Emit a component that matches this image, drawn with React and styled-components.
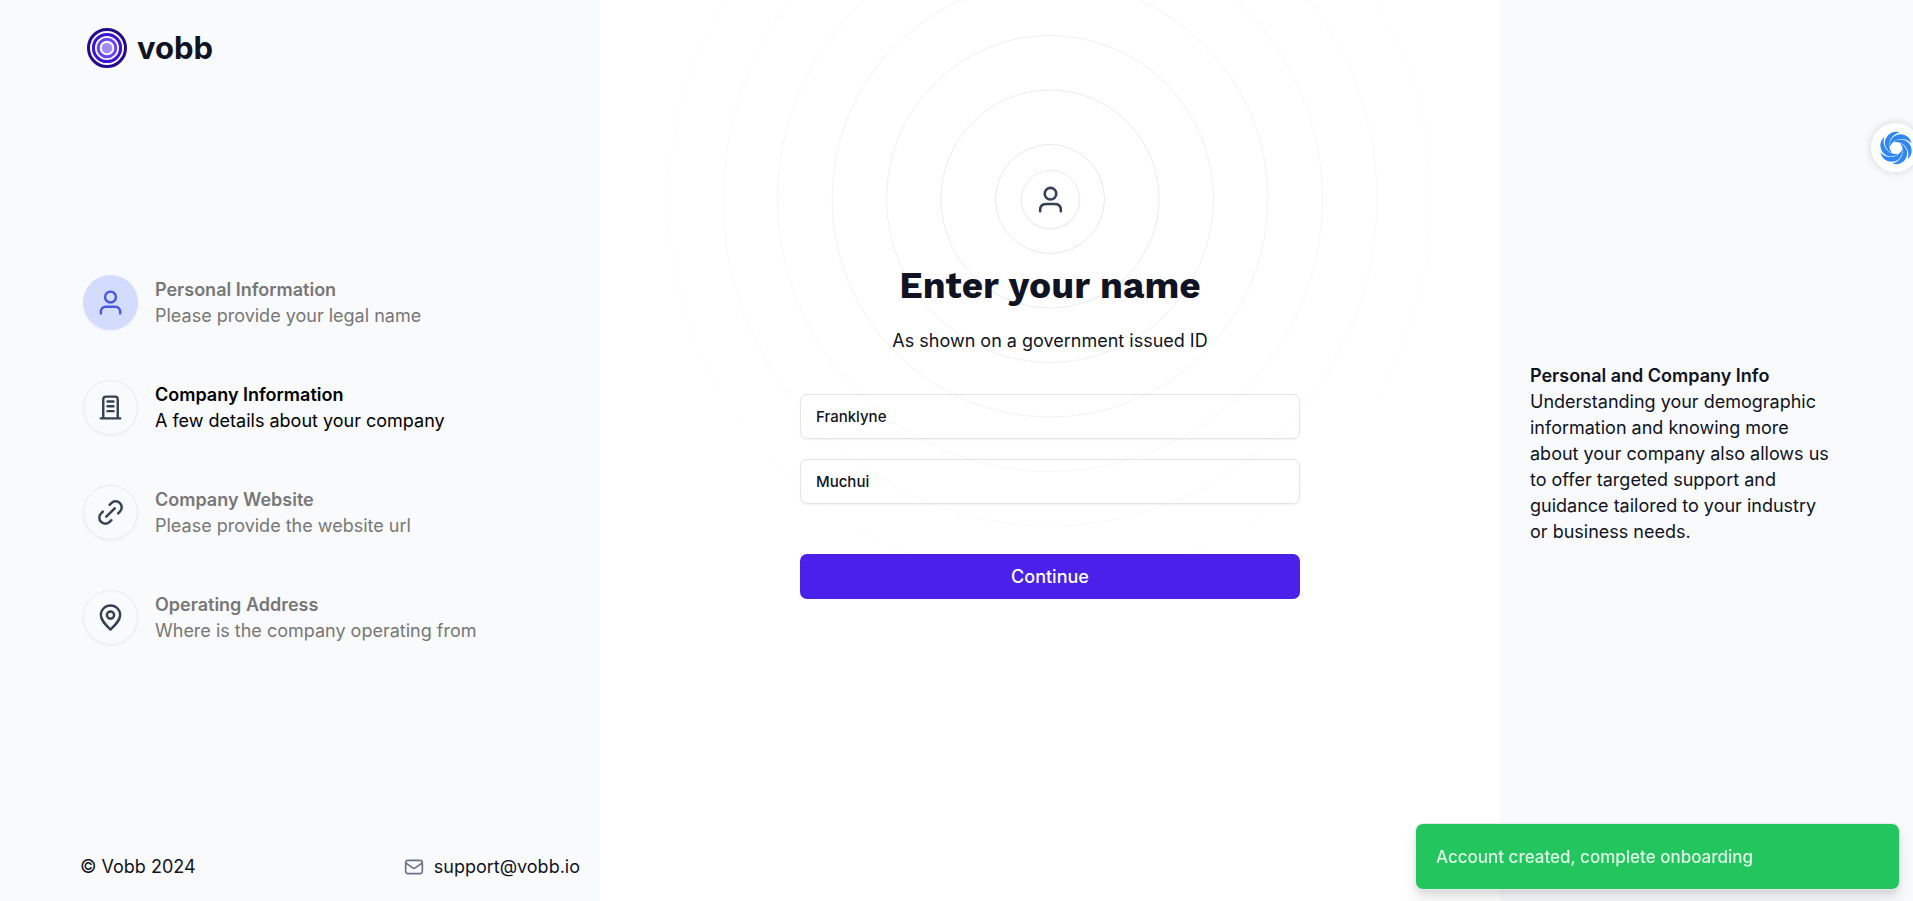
import React from "react";
import styled, { createGlobalStyle } from "styled-components";

const GlobalStyle = createGlobalStyle`
  *, *::before, *::after { box-sizing: border-box; }
  html, body { margin: 0; }
  body {
    font-family: Inter, "Liberation Sans", sans-serif;
    font-size: 18px;
    line-height: 26px;
    color: #101323;
    background: #ffffff;
    overflow-x: hidden;
  }
  h1, h2, p, ol { margin: 0; padding: 0; }
`;

const Page = styled.div`
  display: grid;
  grid-template-columns: 600px minmax(0, 1fr) 413px;
  min-height: 100vh;
`;

const Sidebar = styled.aside`
  display: flex;
  flex-direction: column;
  padding: 28px 20px 20px 80px;
  background: #f9fafc;
`;

const Brand = styled.a`
  display: flex;
  align-items: center;
  gap: 10px;
  padding-left: 7px;
  color: #101323;
  font-size: 31px;
  font-weight: 700;
  line-height: 40px;
  text-decoration: none;
`;

const Steps = styled.ol`
  flex: 1;
  display: flex;
  flex-direction: column;
  justify-content: center;
  gap: 50px;
  padding-left: 3px;
  list-style: none;
`;

const Step = styled.li`
  display: flex;
  align-items: center;
  gap: 17px;
  color: ${(p) => (p.$current ? "#000000" : "#777777")};
`;

const IconCircle = styled.span`
  display: grid;
  place-items: center;
  flex: none;
  width: ${(p) => p.$size}px;
  height: ${(p) => p.$size}px;
  border: ${(p) => (p.$filled ? "0" : "1px solid #e9eaec")};
  border-radius: 50%;
  background: ${(p) => (p.$filled ? "#d3dbff" : "transparent")};
  color: ${(p) => (p.$filled ? "#4259e0" : "#344054")};
  box-shadow: 0 1px 3px rgba(16, 24, 40, 0.05);
`;

const StepTitle = styled.h2`
  font-size: inherit;
  font-weight: 600;
  line-height: inherit;
`;

const Footer = styled.footer`
  display: flex;
  justify-content: space-between;
  padding: 2px 0 1px;
`;

const MailLink = styled.a`
  display: flex;
  align-items: center;
  gap: 10px;
  color: inherit;
  text-decoration: none;

  svg { color: #667085; }
`;

const Main = styled.main`
  position: relative;
  display: flex;
  flex-direction: column;
  align-items: center;
  padding: 170px 24px 24px;
  overflow: hidden;
`;

const Rings = styled.svg`
  position: absolute;
  top: -185px;
  left: 50%;
  transform: translateX(-50%);
  pointer-events: none;
`;

const Form = styled.form`
  position: relative;
  display: flex;
  flex-direction: column;
  align-items: center;
  width: 100%;
  max-width: 500px;
`;

const Heading = styled.h1`
  margin-top: 36px;
  font-family: "Work Sans", Inter, sans-serif;
  font-size: 37px;
  font-weight: 700;
  line-height: 42px;
`;

const Subtitle = styled.p`
  margin: 21px 0 40px;
`;

const Fields = styled.div`
  display: flex;
  flex-direction: column;
  gap: 20px;
  width: 100%;
`;

const TextInput = styled.input`
  width: 100%;
  height: 45px;
  padding: 0 15px;
  border: 1px solid #e4e4e7;
  border-radius: 7px;
  background: transparent;
  box-shadow: 0 1px 2px rgba(0, 0, 0, 0.06);
  color: #101323;
  font: 500 15px/22px Inter, "Liberation Sans", sans-serif;
`;

const SubmitButton = styled.button`
  width: 100%;
  height: 45px;
  margin-top: 50px;
  border: 0;
  border-radius: 7px;
  background: #4b20eb;
  color: #ffffff;
  font: 500 18px/26px Inter, "Liberation Sans", sans-serif;
`;

const InfoPanel = styled.aside`
  display: flex;
  flex-direction: column;
  justify-content: center;
  padding: 6px 84px 0 30px;
  background: #f9fafc;
`;

const InfoTitle = styled.h2`
  font-size: inherit;
  font-weight: 600;
  line-height: inherit;
`;

const Toast = styled.div`
  position: fixed;
  right: 14px;
  bottom: 12px;
  display: flex;
  align-items: center;
  width: 483px;
  min-height: 65px;
  padding: 0 20px;
  border-radius: 7px;
  background: #22c55e;
  color: #dff7e7;
  font-size: 17px;
  font-weight: 500;
  box-shadow: 0 0 0 1px #e7e9ec, 0 10px 15px rgba(0, 0, 0, 0.1), 0 4px 6px rgba(0, 0, 0, 0.08);
`;

const Assistant = styled.button`
  position: fixed;
  top: 123px;
  right: -7px;
  display: grid;
  place-items: center;
  width: 49px;
  height: 49px;
  padding: 0;
  border: 0;
  border-radius: 50%;
  background: #ffffff;
  box-shadow: 0 0 8px rgba(0, 0, 0, 0.16);
`;

const PATHS = {
  user: "M20 21C20 19.6044 20 18.9067 19.8278 18.3389C19.44 17.0605 18.4395 16.06 17.1611 15.6722C16.5933 15.5 15.8956 15.5 14.5 15.5H9.5C8.10444 15.5 7.40665 15.5 6.83886 15.6722C5.56045 16.06 4.56004 17.0605 4.17224 18.3389C4 18.9067 4 19.6044 4 21M16.5 7.5C16.5 9.98528 14.4853 12 12 12C9.51472 12 7.5 9.98528 7.5 7.5C7.5 5.01472 9.51472 3 12 3C14.4853 3 16.5 5.01472 16.5 7.5Z",
  building:
    "M9.5 7H14.5M9.5 11H14.5M9.5 15H14.5M18 21V6.2C18 5.0799 18 4.51984 17.782 4.09202C17.5903 3.71569 17.2843 3.40973 16.908 3.21799C16.4802 3 15.9201 3 14.8 3H9.2C8.0799 3 7.51984 3 7.09202 3.21799C6.71569 3.40973 6.40973 3.71569 6.21799 4.09202C6 4.51984 6 5.0799 6 6.2V21M20 21H4",
  link: "M12.7076 18.3639L11.2933 19.7781C9.34072 21.7308 6.1749 21.7308 4.22228 19.7781C2.26966 17.8255 2.26966 14.6597 4.22228 12.7071L5.63649 11.2929M18.3644 12.7071L19.7786 11.2929C21.7312 9.34024 21.7312 6.17441 19.7786 4.22179C17.826 2.26917 14.6602 2.26917 12.7076 4.22179L11.2933 5.636M8.50045 15.4999L15.5005 8.49994",
  pin: "M12 13C13.6569 13 15 11.6569 15 10C15 8.34315 13.6569 7 12 7C10.3431 7 9 8.34315 9 10C9 11.6569 10.3431 13 12 13ZM12 22C16 18 20 14.4183 20 10C20 5.58172 16.4183 2 12 2C7.58172 2 4 5.58172 4 10C4 14.4183 8 18 12 22Z",
  mail: "M2 7L10.1649 12.7154C10.8261 13.1783 11.1567 13.4097 11.5163 13.4993C11.8339 13.5785 12.1661 13.5785 12.4837 13.4993C12.8433 13.4097 13.1739 13.1783 13.8351 12.7154L22 7M6.8 20H17.2C18.8802 20 19.7202 20 20.362 19.673C20.9265 19.3854 21.3854 18.9265 21.673 18.362C22 17.7202 22 16.8802 22 15.2V8.8C22 7.11984 22 6.27976 21.673 5.63803C21.3854 5.07354 20.9265 4.6146 20.362 4.32698C19.7202 4 18.8802 4 17.2 4H6.8C5.11984 4 4.27976 4 3.63803 4.32698C3.07354 4.6146 2.6146 5.07354 2.32698 5.63803C2 6.27976 2 7.11984 2 8.8V15.2C2 16.8802 2 17.7202 2.32698 18.362C2.6146 18.9265 3.07354 19.3854 3.63803 19.673C4.27976 20 5.11984 20 6.8 20Z",
};

function Icon({ name, size }) {
  return (
    <svg width={size} height={size} viewBox="0 0 24 24" fill="none" stroke="currentColor" strokeWidth="2" strokeLinecap="round" strokeLinejoin="round" aria-hidden="true">
      <path d={PATHS[name]} />
    </svg>
  );
}

function BrandMark() {
  return (
    <svg width="40" height="40" viewBox="0 0 40 40" fill="none" aria-hidden="true">
      <circle cx="20" cy="20" r="18.5" stroke="#240a8c" strokeWidth="3" />
      <circle cx="20" cy="20" r="13.6" stroke="#3a14d6" strokeWidth="3" />
      <circle cx="20" cy="20" r="8.8" stroke="#6a45ee" strokeWidth="3" />
      <circle cx="20" cy="20" r="5.3" fill="#a08df5" />
    </svg>
  );
}

function Swirl() {
  return (
    <svg width="34" height="34" viewBox="-17 -17 34 34" aria-hidden="true">
      {[0, 60, 120, 180, 240, 300].map((a) => (
        <path key={a} transform={`rotate(${a})`} fill="#2f86f6" d="M3.8 -15.6A11 11 0 0 0 -4 5A12.8 12.8 0 0 1 3.8 -15.6Z" />
      ))}
    </svg>
  );
}

const RING_RADII = [54.5, 109, 163.5, 218, 272.5, 327, 381.5];

const STEPS = [
  { icon: "user", title: "Personal Information", text: "Please provide your legal name", filled: true },
  { icon: "building", title: "Company Information", text: "A few details about your company", current: true },
  { icon: "link", title: "Company Website", text: "Please provide the website url" },
  { icon: "pin", title: "Operating Address", text: "Where is the company operating from" },
];

export default function App() {
  return (
    <>
      <GlobalStyle />
      <Page>
        <Sidebar>
          <Brand href="#">
            <BrandMark />
            vobb
          </Brand>
          <Steps>
            {STEPS.map((s) => (
              <Step key={s.title} $current={s.current}>
                <IconCircle $size={55} $filled={s.filled}>
                  <Icon name={s.icon} size={29} />
                </IconCircle>
                <div>
                  <StepTitle>{s.title}</StepTitle>
                  <p>{s.text}</p>
                </div>
              </Step>
            ))}
          </Steps>
          <Footer>
            <span>© Vobb 2024</span>
            <MailLink href="mailto:support@vobb.io">
              <Icon name="mail" size={20} />
              support@vobb.io
            </MailLink>
          </Footer>
        </Sidebar>

        <Main>
          <Rings width="768" height="768" viewBox="0 0 768 768" fill="none" aria-hidden="true">
            <defs>
              <radialGradient id="ringFade" gradientUnits="userSpaceOnUse" cx="384" cy="384" r="430">
                <stop offset="0" stopColor="#fff" />
                <stop offset="1" stopColor="#fff" stopOpacity="0" />
              </radialGradient>
              <mask id="ringMask" maskUnits="userSpaceOnUse" x="0" y="0" width="768" height="768">
                <rect width="768" height="768" fill="url(#ringFade)" />
              </mask>
            </defs>
            <g mask="url(#ringMask)" stroke="#e4e5ea">
              {RING_RADII.map((r) => (
                <circle key={r} cx="384" cy="384" r={r} />
              ))}
            </g>
          </Rings>
          <Form onSubmit={(e) => e.preventDefault()}>
            <IconCircle $size={59}>
              <Icon name="user" size={31} />
            </IconCircle>
            <Heading>Enter your name</Heading>
            <Subtitle>As shown on a government issued ID</Subtitle>
            <Fields>
              <TextInput aria-label="First name" defaultValue="Franklyne" />
              <TextInput aria-label="Last name" defaultValue="Muchui" />
            </Fields>
            <SubmitButton type="submit">Continue</SubmitButton>
          </Form>
        </Main>

        <InfoPanel>
          <InfoTitle>Personal and Company Info</InfoTitle>
          <p>
            Understanding your demographic information and knowing more about your company also allows us to offer
            targeted support and guidance tailored to your industry or business needs.
          </p>
        </InfoPanel>
      </Page>
      <Assistant type="button" aria-label="Open assistant">
        <Swirl />
      </Assistant>
      <Toast role="status">Account created, complete onboarding</Toast>
    </>
  );
}
